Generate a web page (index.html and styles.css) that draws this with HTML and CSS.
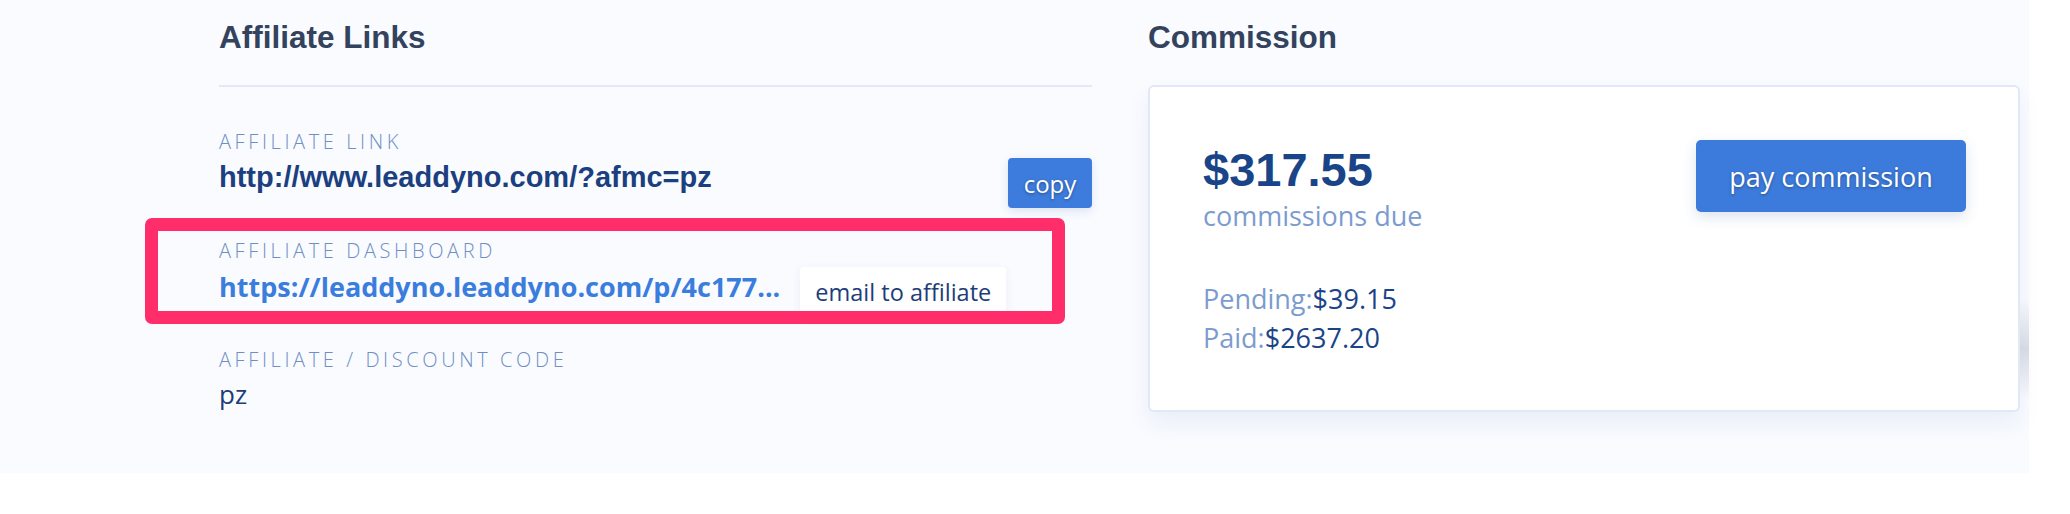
FILE: index.html
```html
<!DOCTYPE html>
<html lang="en">
<head>
<meta charset="utf-8">
<title>Affiliate</title>
<link rel="stylesheet" href="styles.css">
</head>
<body>
<div class="panel">
  <section class="col-left">
    <h2 class="heading heading-ruled">Affiliate Links</h2>
    <div class="item item-first">
      <div class="label">AFFILIATE LINK</div>
      <div class="row">
        <div class="link-main">http://www.leaddyno.com/?afmc=pz</div>
        <button class="btn-copy">copy</button>
      </div>
    </div>
    <div class="item item-dash">
      <div class="label">AFFILIATE DASHBOARD</div>
      <div class="row row-dash">
        <div class="link-dash">https://leaddyno.leaddyno.com/p/4c177...</div>
        <button class="btn-email">email to affiliate</button>
      </div>
      <div class="highlight"></div>
    </div>
    <div class="item">
      <div class="label">AFFILIATE / DISCOUNT CODE</div>
      <div class="code">pz</div>
    </div>
  </section>
  <section class="col-right">
    <h2 class="heading heading-plain">Commission</h2>
    <div class="card">
      <div class="card-info">
        <div class="amount">$317.55</div>
        <div class="amount-label">commissions due</div>
        <div class="stats">
          <div class="stat"><span class="stat-key">Pending:</span><span class="stat-val">$39.15</span></div>
          <div class="stat"><span class="stat-key">Paid:</span><span class="stat-val">$2637.20</span></div>
        </div>
      </div>
      <button class="btn-pay">pay commission</button>
    </div>
    <div class="edge-shadow"></div>
  </section>
</div>
</body>
</html>
```

FILE: styles.css
```css
* { box-sizing: border-box; }

html, body {
  margin: 0;
  padding: 0;
  background: #ffffff;
}

body {
  font-family: "Open Sans", "Noto Sans", sans-serif;
  color: #1d3d78;
}

.panel {
  width: 2029px;
  height: 473px;
  background: #f9fbff;
  display: flex;
  gap: 56px;
  padding: 19px 9px 0 219px;
}

.col-left {
  width: 873px;
  flex: none;
}

.col-right {
  width: 872px;
  flex: none;
  position: relative;
}

.heading {
  margin: 0;
  font-family: "Liberation Sans", Arial, sans-serif;
  font-weight: 700;
  font-size: 31.5px;
  line-height: 37px;
  color: #33435e;
}

.heading-ruled {
  padding-bottom: 29px;
  border-bottom: 2px solid #e1e9f6;
}

.heading-plain {
  margin-bottom: 29px;
}

.item {
  position: relative;
  margin-top: 31px;
}

.item-first {
  margin-top: 43px;
}

.label {
  font-family: "Open Sans", sans-serif;
  font-weight: 300;
  font-size: 20px;
  line-height: 24px;
  letter-spacing: 3.6px;
  color: #6f8fc4;
}

.row {
  display: flex;
  align-items: flex-start;
  margin-top: 4px;
}

.link-main {
  flex: 1;
  margin-top: 2px;
  font-family: "Liberation Sans", Arial, sans-serif;
  font-weight: 700;
  font-size: 29px;
  line-height: 34px;
  color: #1b3f7f;
}

.btn-copy {
  width: 84px;
  height: 50px;
  border: none;
  border-radius: 4px;
  background: #3d7bdc;
  color: #ffffff;
  font-family: "Open Sans", sans-serif;
  font-size: 24px;
  padding: 0;
  text-shadow: 0 1px 3px rgba(0, 0, 0, 0.35);
  box-shadow: 0 3px 10px rgba(40, 80, 150, 0.14);
}

.link-dash {
  margin-top: 3px;
  font-family: "Open Sans", sans-serif;
  font-weight: 700;
  font-size: 27px;
  line-height: 34px;
  color: #3b7ddd;
  white-space: nowrap;
}

.btn-email {
  height: 50px;
  margin-left: 20px;
  padding: 0 15px;
  border: none;
  border-radius: 4px;
  background: #ffffff;
  color: #1d3d78;
  font-family: "Open Sans", sans-serif;
  font-size: 23.5px;
  box-shadow: 0 2px 10px rgba(40, 70, 130, 0.07);
}

.highlight {
  position: absolute;
  left: -74px;
  top: -21px;
  width: 920px;
  height: 106px;
  border: 13px solid #ff2d6a;
  border-radius: 7px;
  pointer-events: none;
}

.code {
  margin-top: 5px;
  font-size: 26px;
  line-height: 34px;
  color: #1d3d78;
}

.card {
  height: 327px;
  background: #ffffff;
  border: 2px solid #e1e9f8;
  border-radius: 6px;
  box-shadow: 0 12px 22px rgba(40, 70, 140, 0.07);
  display: flex;
  justify-content: space-between;
  align-items: flex-start;
  padding: 53px 52px 0 53px;
}

.card-info {
  margin-top: 3px;
}

.amount {
  font-family: "Liberation Sans", Arial, sans-serif;
  font-weight: 700;
  font-size: 47px;
  line-height: 54px;
  color: #1a4488;
}

.amount-label {
  margin-top: 2px;
  font-size: 27px;
  line-height: 34px;
  color: #7c9bcf;
}

.stats {
  margin-top: 46px;
}

.stat {
  font-size: 27px;
  line-height: 39px;
}

.stat-key {
  color: #7c9bcf;
}

.stat-val {
  color: #1a4488;
}

.btn-pay {
  width: 270px;
  height: 72px;
  border: none;
  border-radius: 5px;
  background: #3c7bdc;
  color: #ffffff;
  font-family: "Open Sans", sans-serif;
  font-size: 27px;
  padding: 0;
  text-shadow: 0 1px 3px rgba(0, 0, 0, 0.35);
  box-shadow: 0 5px 14px rgba(40, 80, 150, 0.16);
}

.edge-shadow {
  position: absolute;
  right: -9px;
  top: 280px;
  width: 9px;
  height: 100px;
  background: linear-gradient(to bottom, rgba(200, 204, 214, 0), rgba(200, 204, 214, 0.7) 50%, rgba(200, 204, 214, 0));
  pointer-events: none;
}
```
